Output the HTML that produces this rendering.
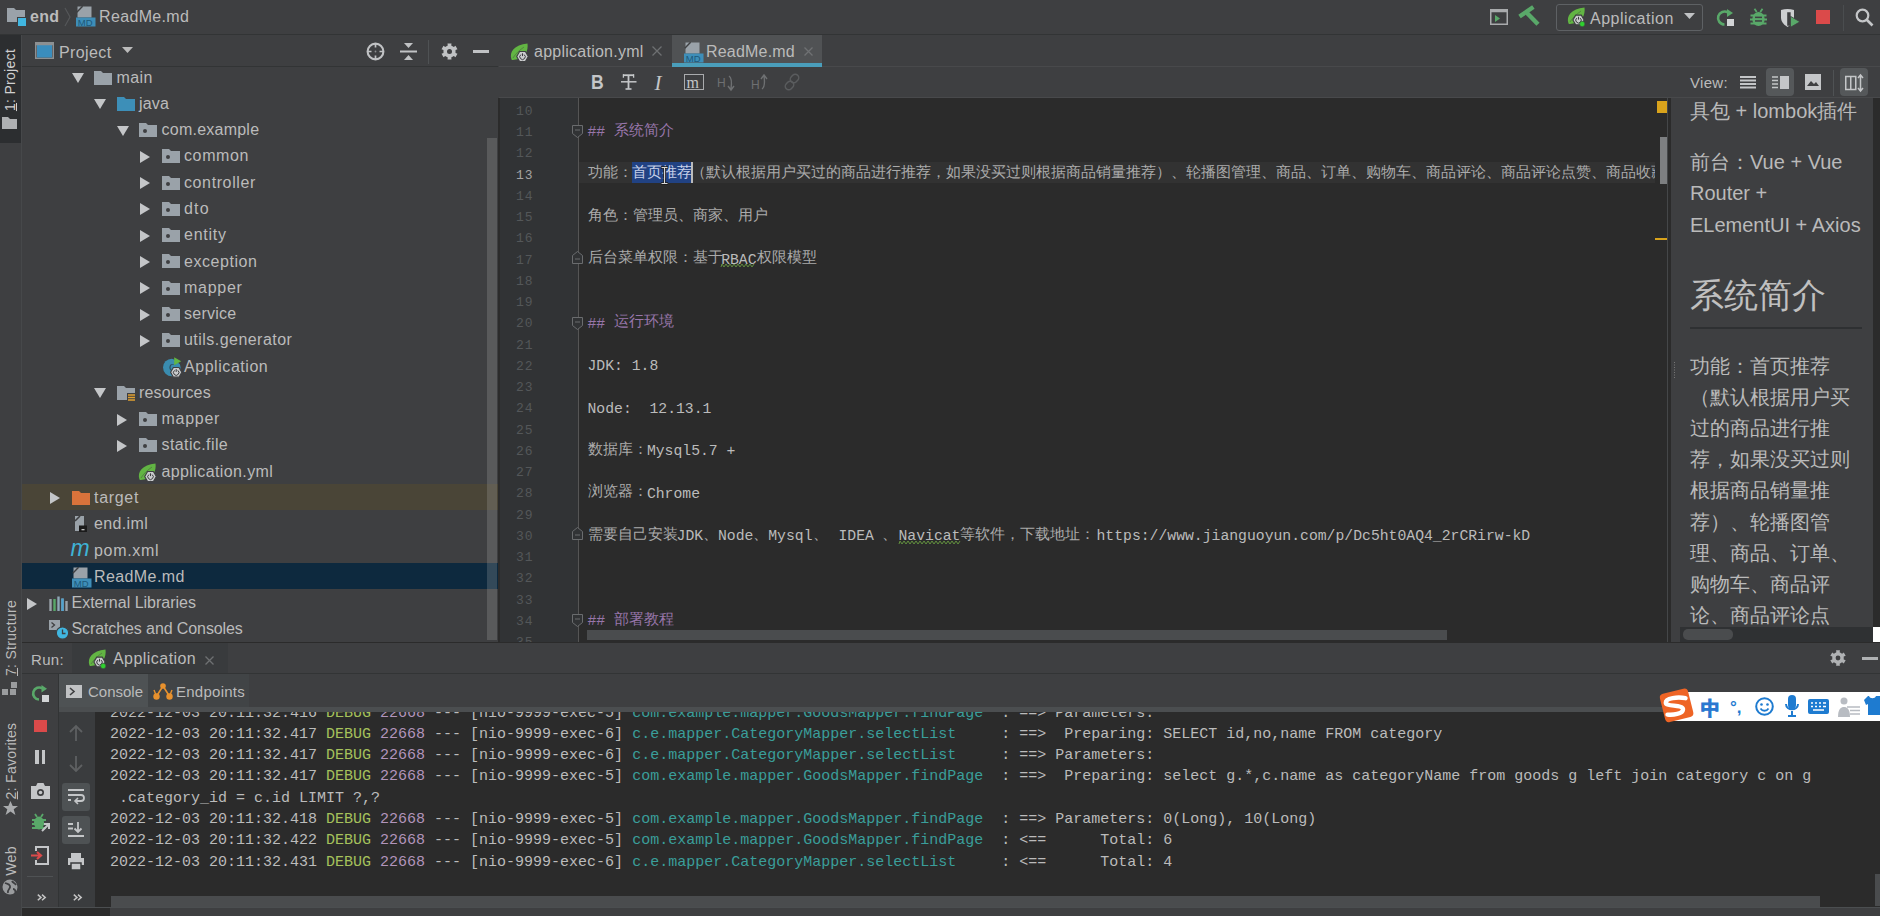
<!DOCTYPE html><html><head><meta charset="utf-8"><style>
*{box-sizing:border-box}
html,body{margin:0;padding:0}
body{width:1880px;height:916px;overflow:hidden;position:relative;background:#3e3f41;font-family:"Liberation Sans",sans-serif;color:#bbbbbb}
.a{position:absolute}
svg{position:absolute;overflow:visible}
</style></head><body>

<div class="a" style="left:0px;top:0px;width:1880px;height:35px;background:#3e3f41;"></div>
<div class="a" style="left:0px;top:34px;width:1880px;height:1px;background:#323435;"></div>
<svg style="left:7px;top:8px" width="20" height="19" viewBox="0 0 20 19"><path d="M0 0h7l2 2h9v12H0z" fill="#9aa2a9"/><rect x="11" y="10" width="8" height="8" fill="#40b6e0"/><rect x="10" y="9" width="10" height="1" fill="#3e3f41"/><rect x="10" y="9" width="1" height="10" fill="#3e3f41"/></svg>
<div class="a" style="left:30px;top:9.16px;white-space:pre;font-family:'Liberation Sans',sans-serif;font-size:16px;line-height:16px;color:#bbbbbb;font-weight:bold;letter-spacing:0.35px;">end</div>
<svg style="left:64px;top:7px" width="8" height="20" viewBox="0 0 8 20"><path d="M1 1 L6 10 L1 19" stroke="#555759" stroke-width="1.2" fill="none"/></svg>
<svg style="left:75.5px;top:5.5px" width="20" height="21" viewBox="0 0 20 21"><path d="M1.5 0.5h14v11h-14z" fill="#9aa2a9"/><path d="M0.8 6.2L6.6 0.2" stroke="#3e3f41" stroke-width="1.4"/><path d="M0 -1h6L0 5z" fill="#3e3f41" opacity="0"/><rect x="0" y="11.5" width="19.5" height="9" fill="#3e8eb8"/><text x="9.2" y="19.6" font-family="Liberation Sans" font-size="9.5" fill="#1d5878" text-anchor="middle">MD</text></svg>
<div class="a" style="left:99px;top:9.16px;white-space:pre;font-family:'Liberation Sans',sans-serif;font-size:16px;line-height:16px;color:#bbbbbb;font-weight:normal;letter-spacing:0.35px;">ReadMe.md</div>
<svg style="left:1490px;top:9px" width="18" height="16" viewBox="0 0 18 16"><rect x="0.75" y="0.75" width="16.5" height="14.5" fill="none" stroke="#a9abad" stroke-width="1.5"/><rect x="0.75" y="0.75" width="16.5" height="2.5" fill="#a9abad"/><path d="M5 6l5 3.5-5 3.5z" fill="#59a869"/></svg>
<svg style="left:1515px;top:2px" width="30" height="28" viewBox="0 0 30 28"><path d="M6.3 13.3 L16.6 6.2" stroke="#59a869" stroke-width="4.3" stroke-linecap="square"/><path d="M12 11 L23 22.3" stroke="#59a869" stroke-width="4.4"/></svg>
<div class="a" style="left:1556px;top:4px;width:147px;height:27px;border:1px solid #5e6164;border-radius:3px"></div>
<svg style="left:1567px;top:7px" width="20" height="20" viewBox="0 0 20 20"><path d="M1.5 16.5 C-1 9 4 2 17.5 0.5 C18.5 8 15 15.5 6 16.5 C4 16.8 2.5 17.5 1.5 16.5z" fill="#62b543"/><path d="M3 15 C6 10 10 7 14 4" stroke="#3e3f41" stroke-width="0.8" fill="none" opacity="0.5"/><polygon points="17.10,13.00 14.30,17.85 8.70,17.85 5.90,13.00 8.70,8.15 14.30,8.15" fill="#c9cbcd" stroke="#3e3f41" stroke-width="1.1"/><path d="M9.90 11.10A2.7 2.7 0 1 0 13.10 11.10" stroke="#3a3b3d" stroke-width="1.0" fill="none"/><path d="M11.50 9.80v2.8" stroke="#3a3b3d" stroke-width="1.0"/><circle cx="15.2" cy="17" r="2.7" fill="#2fd12f" stroke="#3e3f41" stroke-width="0.6"/></svg>
<div class="a" style="left:1590px;top:10.76px;white-space:pre;font-family:'Liberation Sans',sans-serif;font-size:16px;line-height:16px;color:#bbbbbb;font-weight:normal;letter-spacing:0.5px;">Application</div>
<svg style="left:1684px;top:13px" width="12" height="7" viewBox="0 0 12 7"><path d="M0 0h11L5.5 6z" fill="#c0c2c4"/></svg>
<svg style="left:1717px;top:9px" width="18" height="17" viewBox="0 0 18 17"><path d="M11 3.5 A6.5 6.5 0 1 0 7.5 15.5" stroke="#59a869" stroke-width="2.6" fill="none"/><path d="M10 0 L16 4 L10 8z" fill="#59a869"/><rect x="10" y="10" width="7" height="7" fill="#d2d4d6"/></svg>
<svg style="left:1750px;top:8px" width="17" height="18" viewBox="0 0 17 18"><ellipse cx="8.5" cy="11" rx="6.2" ry="7" fill="#59a869"/><path d="M0.5 7.5h16M0 11.5h17M0.5 15.5h16" stroke="#59a869" stroke-width="2.2"/><path d="M4.5 0.8l2.2 3.2M12.5 0.8l-2.2 3.2" stroke="#59a869" stroke-width="1.8"/><rect x="5" y="8.6" width="7" height="1.5" fill="#3e3f41"/><rect x="5" y="12.2" width="7" height="1.5" fill="#3e3f41"/></svg>
<svg style="left:1780px;top:8px" width="21" height="20" viewBox="0 0 21 20"><path d="M1 2 Q7.5 0 14 2 V9.5 C14 14.5 10 17.5 7.5 19 C5 17.5 1 14.5 1 9.5z" fill="#cdcfd1"/><path d="M7.2 4.2h3.6v13.5h-3.6z" fill="#3e3f41"/><path d="M10.8 4.2h3.2v6h-3.2z" fill="#cdcfd1"/><path d="M10.5 8.3 L20 13.8 L10.5 19.3z" fill="#59a869" stroke="#3e3f41" stroke-width="0.8"/></svg>
<div class="a" style="left:1816px;top:10px;width:14px;height:14px;background:#db4a4a;"></div>
<div class="a" style="left:1843px;top:5px;width:1px;height:26px;background:#4a4d4f;"></div>
<svg style="left:1855px;top:8px" width="19" height="19" viewBox="0 0 19 19"><circle cx="7.5" cy="7.5" r="5.8" stroke="#c4c6c8" stroke-width="2.2" fill="none"/><path d="M11.5 11.5 L17.5 17.5" stroke="#c4c6c8" stroke-width="2.6"/></svg>
<div class="a" style="left:0px;top:35px;width:21px;height:881px;background:#3e3f41;"></div>
<div class="a" style="left:21px;top:35px;width:1px;height:881px;background:#46484a;"></div>
<div class="a" style="left:0px;top:35px;width:21px;height:108px;background:#2c2e30;"></div>
<div class="a" style="left:10px;top:80px;transform:translate(-50%,-50%) rotate(-90deg);white-space:nowrap;font-size:14px;line-height:14px;color:#d0d0d0;letter-spacing:0.3px"><u>1</u>: Project</div>
<svg style="left:2px;top:117px" width="15" height="12" viewBox="0 0 15 12"><path d="M0 0h6l2 2h7v10H0z" fill="#aeb0b2"/></svg>
<div class="a" style="left:11px;top:638px;transform:translate(-50%,-50%) rotate(-90deg);white-space:nowrap;font-size:14px;line-height:14px;color:#bbbbbb;letter-spacing:0.3px"><u>7</u>: Structure</div>
<svg style="left:2px;top:682px" width="15" height="13" viewBox="0 0 15 13"><rect x="9" y="0" width="6" height="6" fill="#9a9c9e"/><rect x="0" y="7" width="6" height="6" fill="#9a9c9e"/><rect x="8" y="7" width="6" height="6" fill="#9a9c9e"/></svg>
<div class="a" style="left:11px;top:761px;transform:translate(-50%,-50%) rotate(-90deg);white-space:nowrap;font-size:14px;line-height:14px;color:#bbbbbb;letter-spacing:0.3px"><u>2</u>: Favorites</div>
<svg style="left:3px;top:801px" width="15" height="15" viewBox="0 0 15 15"><path d="M7.5 0l2.2 5h5.3l-4.3 3.3 1.7 5.7-4.9-3.5-4.9 3.5 1.7-5.7L0 5h5.3z" fill="#a9abad"/></svg>
<div class="a" style="left:11px;top:861px;transform:translate(-50%,-50%) rotate(-90deg);white-space:nowrap;font-size:14px;line-height:14px;color:#bbbbbb;letter-spacing:0.3px">Web</div>
<svg style="left:2px;top:879px" width="16" height="16" viewBox="0 0 16 16"><circle cx="8" cy="8" r="7.5" fill="#9a9c9e"/><path d="M3 4c2 1 4 0 5 3s-3 3-2 7M10 2c1 2 3 2 4 4M11 10c2 0 3 2 2 4" stroke="#3e3f41" stroke-width="1.8" fill="none"/></svg>
<div class="a" style="left:22px;top:35px;width:476px;height:607px;background:#3e3f41;"></div>
<div class="a" style="left:22px;top:66px;width:476px;height:1px;background:#323435;"></div>
<svg style="left:35px;top:42px" width="19" height="17" viewBox="0 0 19 17"><rect x="0.75" y="0.75" width="17.5" height="15.5" fill="none" stroke="#8d9092" stroke-width="1.5"/><rect x="2" y="3" width="15" height="12.5" fill="#3a8dbd"/><rect x="0.75" y="0.75" width="17.5" height="2.5" fill="#8d9092"/></svg>
<div class="a" style="left:59px;top:44.76px;white-space:pre;font-family:'Liberation Sans',sans-serif;font-size:16px;line-height:16px;color:#bbbbbb;font-weight:normal;letter-spacing:0.38px;">Project</div>
<svg style="left:122px;top:47px" width="12" height="7" viewBox="0 0 12 7"><path d="M0 0h11L5.5 6z" fill="#bbbbbb"/></svg>
<svg style="left:366px;top:42px" width="19" height="19" viewBox="0 0 19 19"><circle cx="9.5" cy="9.5" r="7.9" stroke="#c0c2c4" stroke-width="2.1" fill="none"/><path d="M9.5 1.5v4M9.5 13.5v4M1.5 9.5h4M13.5 9.5h4" stroke="#c0c2c4" stroke-width="1.7"/><circle cx="9.5" cy="9.5" r="0.9" fill="#8a8c8e"/></svg>
<svg style="left:400px;top:43px" width="17" height="17" viewBox="0 0 17 17"><path d="M4 0h9L8.5 5z" fill="#c0c2c4"/><rect x="0" y="7.5" width="17" height="2" fill="#c0c2c4"/><path d="M4 17h9L8.5 12z" fill="#c0c2c4"/></svg>
<div class="a" style="left:428px;top:40px;width:1px;height:24px;background:#4f5254;"></div>
<svg style="left:441px;top:43px" width="17" height="17" viewBox="0 0 17 17"><path d="M6.79,2.54 L6.49,0.45 L10.51,0.45 L10.21,2.54 L12.81,4.04 L14.47,2.73 L16.48,6.21 L14.52,7.00 L14.52,10.00 L16.48,10.79 L14.47,14.27 L12.81,12.96 L10.21,14.46 L10.51,16.55 L6.49,16.55 L6.79,14.46 L4.19,12.96 L2.53,14.27 L0.52,10.79 L2.48,10.00 L2.48,7.00 L0.52,6.21 L2.53,2.73 L4.19,4.04z" fill="#c0c2c4"/><circle cx="8.5" cy="8.5" r="2.5" fill="#3e3f41"/></svg>
<div class="a" style="left:473px;top:50px;width:16px;height:3px;background:#c0c2c4;"></div>
<div class="a" style="left:22px;top:483.98px;width:476px;height:26.5px;background:#4a4537;"></div>
<div class="a" style="left:22px;top:562.9200000000001px;width:476px;height:25.8px;background:#0d293e;"></div>
<svg style="left:71.5px;top:73.0px" width="12" height="11" viewBox="0 0 12 11"><path d="M0 0h12L6 10z" fill="#c4c6c8"/></svg>
<svg style="left:94.0px;top:70.5px" width="18" height="14" viewBox="0 0 18 14"><path d="M0 0h7l2 2h9v12H0z" fill="#9aa2a9"/></svg>
<div class="a" style="left:116.5px;top:69.56px;white-space:pre;font-family:'Liberation Sans',sans-serif;font-size:16px;line-height:16px;color:#bbbbbb;font-weight:normal;letter-spacing:0.37px;">main</div>
<svg style="left:94.0px;top:99.28px" width="12" height="11" viewBox="0 0 12 11"><path d="M0 0h12L6 10z" fill="#c4c6c8"/></svg>
<svg style="left:116.5px;top:96.78px" width="18" height="14" viewBox="0 0 18 14"><path d="M0 0h7l2 2h9v12H0z" fill="#3d8fb8"/></svg>
<div class="a" style="left:139.0px;top:95.84px;white-space:pre;font-family:'Liberation Sans',sans-serif;font-size:16px;line-height:16px;color:#bbbbbb;font-weight:normal;letter-spacing:0.2px;">java</div>
<svg style="left:116.5px;top:125.56px" width="12" height="11" viewBox="0 0 12 11"><path d="M0 0h12L6 10z" fill="#c4c6c8"/></svg>
<svg style="left:139.0px;top:123.06px" width="18" height="14" viewBox="0 0 18 14"><path d="M0 0h7l2 2h9v12H0z" fill="#9aa2a9"/><circle cx="6" cy="8" r="2" fill="#3e3f41"/></svg>
<div class="a" style="left:161.5px;top:122.12px;white-space:pre;font-family:'Liberation Sans',sans-serif;font-size:16px;line-height:16px;color:#bbbbbb;font-weight:normal;letter-spacing:0.24px;">com.example</div>
<svg style="left:139.5px;top:150.84px" width="11" height="12" viewBox="0 0 11 12"><path d="M0 0v12L10 6z" fill="#c4c6c8"/></svg>
<svg style="left:161.5px;top:149.34px" width="18" height="14" viewBox="0 0 18 14"><path d="M0 0h7l2 2h9v12H0z" fill="#9aa2a9"/><circle cx="6" cy="8" r="2" fill="#3e3f41"/></svg>
<div class="a" style="left:184.0px;top:148.40px;white-space:pre;font-family:'Liberation Sans',sans-serif;font-size:16px;line-height:16px;color:#bbbbbb;font-weight:normal;letter-spacing:0.62px;">common</div>
<svg style="left:139.5px;top:177.12px" width="11" height="12" viewBox="0 0 11 12"><path d="M0 0v12L10 6z" fill="#c4c6c8"/></svg>
<svg style="left:161.5px;top:175.62px" width="18" height="14" viewBox="0 0 18 14"><path d="M0 0h7l2 2h9v12H0z" fill="#9aa2a9"/><circle cx="6" cy="8" r="2" fill="#3e3f41"/></svg>
<div class="a" style="left:184.0px;top:174.68px;white-space:pre;font-family:'Liberation Sans',sans-serif;font-size:16px;line-height:16px;color:#bbbbbb;font-weight:normal;letter-spacing:0.61px;">controller</div>
<svg style="left:139.5px;top:203.4px" width="11" height="12" viewBox="0 0 11 12"><path d="M0 0v12L10 6z" fill="#c4c6c8"/></svg>
<svg style="left:161.5px;top:201.9px" width="18" height="14" viewBox="0 0 18 14"><path d="M0 0h7l2 2h9v12H0z" fill="#9aa2a9"/><circle cx="6" cy="8" r="2" fill="#3e3f41"/></svg>
<div class="a" style="left:184.0px;top:200.96px;white-space:pre;font-family:'Liberation Sans',sans-serif;font-size:16px;line-height:16px;color:#bbbbbb;font-weight:normal;letter-spacing:1.2px;">dto</div>
<svg style="left:139.5px;top:229.68px" width="11" height="12" viewBox="0 0 11 12"><path d="M0 0v12L10 6z" fill="#c4c6c8"/></svg>
<svg style="left:161.5px;top:228.18px" width="18" height="14" viewBox="0 0 18 14"><path d="M0 0h7l2 2h9v12H0z" fill="#9aa2a9"/><circle cx="6" cy="8" r="2" fill="#3e3f41"/></svg>
<div class="a" style="left:184.0px;top:227.24px;white-space:pre;font-family:'Liberation Sans',sans-serif;font-size:16px;line-height:16px;color:#bbbbbb;font-weight:normal;letter-spacing:0.76px;">entity</div>
<svg style="left:139.5px;top:255.96px" width="11" height="12" viewBox="0 0 11 12"><path d="M0 0v12L10 6z" fill="#c4c6c8"/></svg>
<svg style="left:161.5px;top:254.46px" width="18" height="14" viewBox="0 0 18 14"><path d="M0 0h7l2 2h9v12H0z" fill="#9aa2a9"/><circle cx="6" cy="8" r="2" fill="#3e3f41"/></svg>
<div class="a" style="left:184.0px;top:253.52px;white-space:pre;font-family:'Liberation Sans',sans-serif;font-size:16px;line-height:16px;color:#bbbbbb;font-weight:normal;letter-spacing:0.54px;">exception</div>
<svg style="left:139.5px;top:282.24px" width="11" height="12" viewBox="0 0 11 12"><path d="M0 0v12L10 6z" fill="#c4c6c8"/></svg>
<svg style="left:161.5px;top:280.74px" width="18" height="14" viewBox="0 0 18 14"><path d="M0 0h7l2 2h9v12H0z" fill="#9aa2a9"/><circle cx="6" cy="8" r="2" fill="#3e3f41"/></svg>
<div class="a" style="left:184.0px;top:279.80px;white-space:pre;font-family:'Liberation Sans',sans-serif;font-size:16px;line-height:16px;color:#bbbbbb;font-weight:normal;letter-spacing:0.72px;">mapper</div>
<svg style="left:139.5px;top:308.52px" width="11" height="12" viewBox="0 0 11 12"><path d="M0 0v12L10 6z" fill="#c4c6c8"/></svg>
<svg style="left:161.5px;top:307.02px" width="18" height="14" viewBox="0 0 18 14"><path d="M0 0h7l2 2h9v12H0z" fill="#9aa2a9"/><circle cx="6" cy="8" r="2" fill="#3e3f41"/></svg>
<div class="a" style="left:184.0px;top:306.08px;white-space:pre;font-family:'Liberation Sans',sans-serif;font-size:16px;line-height:16px;color:#bbbbbb;font-weight:normal;letter-spacing:0.25px;">service</div>
<svg style="left:139.5px;top:334.8px" width="11" height="12" viewBox="0 0 11 12"><path d="M0 0v12L10 6z" fill="#c4c6c8"/></svg>
<svg style="left:161.5px;top:333.3px" width="18" height="14" viewBox="0 0 18 14"><path d="M0 0h7l2 2h9v12H0z" fill="#9aa2a9"/><circle cx="6" cy="8" r="2" fill="#3e3f41"/></svg>
<div class="a" style="left:184.0px;top:332.36px;white-space:pre;font-family:'Liberation Sans',sans-serif;font-size:16px;line-height:16px;color:#bbbbbb;font-weight:normal;letter-spacing:0.46px;">utils.generator</div>
<svg style="left:161.5px;top:356.58000000000004px" width="20" height="20" viewBox="0 0 20 20"><circle cx="9.8" cy="10.5" r="8.8" fill="#3a8caf"/><circle cx="10.8" cy="10.5" r="3.4" fill="#2f4f5f"/><circle cx="11.6" cy="10.5" r="3.0" fill="#3a8caf"/><path d="M10 1 L19 8 L19 0z" fill="#3e3f41"/><path d="M12.2 0.3 L19.2 4.3 L12.2 8.3z" fill="#62b543"/><polygon points="19.80,15.30 17.00,20.15 11.40,20.15 8.60,15.30 11.40,10.45 17.00,10.45" fill="#c9cbcd" stroke="#3e3f41" stroke-width="1.1"/><path d="M12.60 13.40A2.7 2.7 0 1 0 15.80 13.40" stroke="#3a3b3d" stroke-width="1.0" fill="none"/><path d="M14.20 12.10v2.8" stroke="#3a3b3d" stroke-width="1.0"/></svg>
<div class="a" style="left:184.0px;top:358.64px;white-space:pre;font-family:'Liberation Sans',sans-serif;font-size:16px;line-height:16px;color:#bbbbbb;font-weight:normal;letter-spacing:0.55px;">Application</div>
<svg style="left:94.0px;top:388.36px" width="12" height="11" viewBox="0 0 12 11"><path d="M0 0h12L6 10z" fill="#c4c6c8"/></svg>
<svg style="left:116.5px;top:385.86px" width="20" height="16" viewBox="0 0 20 16"><path d="M0 0h7l2 2h9v12H0z" fill="#9aa2a9"/><rect x="10" y="7" width="9" height="9" fill="#3e3f41"/><path d="M11 9h7M11 11.5h7M11 14h7" stroke="#e0a030" stroke-width="1.5"/></svg>
<div class="a" style="left:139.0px;top:384.92px;white-space:pre;font-family:'Liberation Sans',sans-serif;font-size:16px;line-height:16px;color:#bbbbbb;font-weight:normal;letter-spacing:0.18px;">resources</div>
<svg style="left:117.0px;top:413.64px" width="11" height="12" viewBox="0 0 11 12"><path d="M0 0v12L10 6z" fill="#c4c6c8"/></svg>
<svg style="left:139.0px;top:412.14px" width="18" height="14" viewBox="0 0 18 14"><path d="M0 0h7l2 2h9v12H0z" fill="#9aa2a9"/><circle cx="6" cy="8" r="2" fill="#3e3f41"/></svg>
<div class="a" style="left:161.5px;top:411.20px;white-space:pre;font-family:'Liberation Sans',sans-serif;font-size:16px;line-height:16px;color:#bbbbbb;font-weight:normal;letter-spacing:0.72px;">mapper</div>
<svg style="left:117.0px;top:439.92px" width="11" height="12" viewBox="0 0 11 12"><path d="M0 0v12L10 6z" fill="#c4c6c8"/></svg>
<svg style="left:139.0px;top:438.42px" width="18" height="14" viewBox="0 0 18 14"><path d="M0 0h7l2 2h9v12H0z" fill="#9aa2a9"/><circle cx="6" cy="8" r="2" fill="#3e3f41"/></svg>
<div class="a" style="left:161.5px;top:437.48px;white-space:pre;font-family:'Liberation Sans',sans-serif;font-size:16px;line-height:16px;color:#bbbbbb;font-weight:normal;letter-spacing:0.4px;">static.file</div>
<svg style="left:138.0px;top:463.20000000000005px" width="20" height="20" viewBox="0 0 20 20"><path d="M1.5 16.5 C-1 9 4 2 17.5 0.5 C18.5 8 15 15.5 6 16.5 C4 16.8 2.5 17.5 1.5 16.5z" fill="#62b543"/><path d="M3 15 C6 10 10 7 14 4" stroke="#3e3f41" stroke-width="0.8" fill="none" opacity="0.5"/><polygon points="18.30,13.50 15.40,18.52 9.60,18.52 6.70,13.50 9.60,8.48 15.40,8.48" fill="#c9cbcd" stroke="#3e3f41" stroke-width="1.1"/><path d="M10.90 11.60A2.7 2.7 0 1 0 14.10 11.60" stroke="#3a3b3d" stroke-width="1.0" fill="none"/><path d="M12.50 10.30v2.8" stroke="#3a3b3d" stroke-width="1.0"/></svg>
<div class="a" style="left:161.5px;top:463.76px;white-space:pre;font-family:'Liberation Sans',sans-serif;font-size:16px;line-height:16px;color:#bbbbbb;font-weight:normal;letter-spacing:0.39px;">application.yml</div>
<svg style="left:49.5px;top:492.48px" width="11" height="12" viewBox="0 0 11 12"><path d="M0 0v12L10 6z" fill="#c4c6c8"/></svg>
<svg style="left:71.5px;top:490.98px" width="18" height="14" viewBox="0 0 18 14"><path d="M0 0h7l2 2h9v12H0z" fill="#d9733b"/></svg>
<div class="a" style="left:94.0px;top:490.04px;white-space:pre;font-family:'Liberation Sans',sans-serif;font-size:16px;line-height:16px;color:#bbbbbb;font-weight:normal;letter-spacing:0.7px;">target</div>
<svg style="left:71.5px;top:515.76px" width="18" height="18" viewBox="0 0 18 18"><path d="M3 0h9v15H3z" fill="#9aa2a9"/><path d="M3 5l5-5" stroke="#3e3f41" stroke-width="1.6"/><rect x="7" y="9.5" width="8" height="6.5" fill="#1b1b1b"/><rect x="9.5" y="13" width="3" height="1.3" fill="#c0c0c0"/></svg>
<div class="a" style="left:94.0px;top:516.32px;white-space:pre;font-family:'Liberation Sans',sans-serif;font-size:16px;line-height:16px;color:#bbbbbb;font-weight:normal;letter-spacing:0.37px;">end.iml</div>
<div class="a" style="left:70.5px;top:536.67px;white-space:pre;font-family:'Liberation Sans',sans-serif;font-size:23px;line-height:23px;color:#3eb3d6;font-weight:normal;letter-spacing:0px;"><i>m</i></div>
<div class="a" style="left:94.0px;top:542.60px;white-space:pre;font-family:'Liberation Sans',sans-serif;font-size:16px;line-height:16px;color:#bbbbbb;font-weight:normal;letter-spacing:0.7px;">pom.xml</div>
<svg style="left:71.5px;top:567.32px" width="20" height="21" viewBox="0 0 20 21"><path d="M1.5 0.5h14v11h-14z" fill="#9aa2a9"/><path d="M0.8 6.2L6.6 0.2" stroke="#3e3f41" stroke-width="1.4"/><path d="M0 -1h6L0 5z" fill="#3e3f41" opacity="0"/><rect x="0" y="11.5" width="19.5" height="9" fill="#3e8eb8"/><text x="9.2" y="19.6" font-family="Liberation Sans" font-size="9.5" fill="#1d5878" text-anchor="middle">MD</text></svg>
<div class="a" style="left:94.0px;top:568.88px;white-space:pre;font-family:'Liberation Sans',sans-serif;font-size:16px;line-height:16px;color:#bbbbbb;font-weight:normal;letter-spacing:0.4px;">ReadMe.md</div>
<svg style="left:27.0px;top:597.6px" width="11" height="12" viewBox="0 0 11 12"><path d="M0 0v12L10 6z" fill="#c4c6c8"/></svg>
<svg style="left:49.0px;top:595.6px" width="19" height="15" viewBox="0 0 19 15"><path d="M1.5 3v12M13.5 2.5v12.5M17.5 5v10" stroke="#9aa2a9" stroke-width="2.4"/><path d="M5.5 3v12" stroke="#59a869" stroke-width="2.4"/><path d="M9.5 0.5v14.5" stroke="#8fa8b8" stroke-width="2.4"/><path d="M13.5 2.5v12.5" stroke="#4fa3d0" stroke-width="2.4"/></svg>
<div class="a" style="left:71.5px;top:595.16px;white-space:pre;font-family:'Liberation Sans',sans-serif;font-size:16px;line-height:16px;color:#bbbbbb;font-weight:normal;letter-spacing:0.0px;">External Libraries</div>
<svg style="left:49.0px;top:619.88px" width="20" height="20" viewBox="0 0 20 20"><rect x="0" y="0" width="11" height="10" fill="#9aa2a9"/><path d="M2.5 2.5l3 2.5-3 2.5" stroke="#3e3f41" stroke-width="1.3" fill="none"/><circle cx="13.5" cy="13" r="6.2" fill="#40b6e0" stroke="#3e3f41" stroke-width="1.2"/><path d="M13.5 9.5v4h3" stroke="#3e3f41" stroke-width="1.3" fill="none"/></svg>
<div class="a" style="left:71.5px;top:621.44px;white-space:pre;font-family:'Liberation Sans',sans-serif;font-size:16px;line-height:16px;color:#bbbbbb;font-weight:normal;letter-spacing:-0.1px;">Scratches and Consoles</div>
<div class="a" style="left:487px;top:137.5px;width:10px;height:502px;background:rgba(187,187,187,0.22);"></div>
<div class="a" style="left:498px;top:35px;width:1382px;height:31px;background:#3e3f41;"></div>
<div class="a" style="left:498px;top:98px;width:1px;height:544px;background:#2b2b2b;"></div>
<div class="a" style="left:499px;top:66px;width:1381px;height:1px;background:#48494b;"></div>
<div class="a" style="left:672px;top:35px;width:150px;height:31px;background:#505254;"></div>
<div class="a" style="left:672px;top:62.5px;width:150px;height:4.5px;background:#4a9ebb;"></div>
<svg style="left:510px;top:43px" width="20" height="20" viewBox="0 0 20 20"><path d="M1.5 16.5 C-1 9 4 2 17.5 0.5 C18.5 8 15 15.5 6 16.5 C4 16.8 2.5 17.5 1.5 16.5z" fill="#62b543"/><path d="M3 15 C6 10 10 7 14 4" stroke="#3e3f41" stroke-width="0.8" fill="none" opacity="0.5"/><polygon points="18.30,13.50 15.40,18.52 9.60,18.52 6.70,13.50 9.60,8.48 15.40,8.48" fill="#c9cbcd" stroke="#3e3f41" stroke-width="1.1"/><path d="M10.90 11.60A2.7 2.7 0 1 0 14.10 11.60" stroke="#3a3b3d" stroke-width="1.0" fill="none"/><path d="M12.50 10.30v2.8" stroke="#3a3b3d" stroke-width="1.0"/></svg>
<div class="a" style="left:534px;top:44.46px;white-space:pre;font-family:'Liberation Sans',sans-serif;font-size:16px;line-height:16px;color:#bbbbbb;font-weight:normal;letter-spacing:0.25px;">application.yml</div>
<svg style="left:652px;top:46px" width="10" height="10" viewBox="0 0 10 10"><path d="M0.5 0.5l9 9M9.5 0.5l-9 9" stroke="#6e7072" stroke-width="1.3"/></svg>
<svg style="left:684px;top:41.5px" width="20" height="21" viewBox="0 0 20 21"><path d="M1.5 0.5h14v11h-14z" fill="#9aa2a9"/><path d="M0.8 6.2L6.6 0.2" stroke="#3e3f41" stroke-width="1.4"/><path d="M0 -1h6L0 5z" fill="#3e3f41" opacity="0"/><rect x="0" y="11.5" width="19.5" height="9" fill="#3e8eb8"/><text x="9.2" y="19.6" font-family="Liberation Sans" font-size="9.5" fill="#1d5878" text-anchor="middle">MD</text></svg>
<div class="a" style="left:706px;top:44.46px;white-space:pre;font-family:'Liberation Sans',sans-serif;font-size:16px;line-height:16px;color:#bbbbbb;font-weight:normal;letter-spacing:0.2px;">ReadMe.md</div>
<svg style="left:804px;top:47px" width="9" height="9" viewBox="0 0 9 9"><path d="M0.5 0.5l8 8M8.5 0.5l-8 8" stroke="#6f7173" stroke-width="1.3"/></svg>
<div class="a" style="left:499px;top:67px;width:1381px;height:30px;background:#3e3f41;"></div>
<div class="a" style="left:499px;top:97px;width:1381px;height:1px;background:#48494b;"></div>
<div class="a" style="left:590.5px;top:72.37px;white-space:pre;font-family:'Liberation Sans',sans-serif;font-size:20px;line-height:20px;color:#c4c6c8;font-weight:bold;letter-spacing:0px;transform:scaleX(0.88);transform-origin:0 0;">B</div>
<svg style="left:620px;top:74px" width="17" height="16" viewBox="0 0 17 16"><path d="M3 1.2h11" stroke="#c4c6c8" stroke-width="1.8"/><path d="M3.4 0.3v3.4M13.6 0.3v3.4" stroke="#c4c6c8" stroke-width="1.3"/><path d="M8.5 1v14" stroke="#c4c6c8" stroke-width="1.8"/><path d="M5.5 15h6" stroke="#c4c6c8" stroke-width="1.6"/><path d="M1 7.8h15.5" stroke="#c4c6c8" stroke-width="1.5"/></svg>
<div class="a" style="left:654.5px;top:73.40px;white-space:pre;font-family:'Liberation Serif',serif;font-size:21px;line-height:21px;color:#c4c6c8;font-weight:normal;letter-spacing:0px;"><i>I</i></div>
<svg style="left:684px;top:74px" width="20" height="16" viewBox="0 0 20 16"><rect x="0.5" y="0.5" width="19" height="15" fill="none" stroke="#a9abad" stroke-width="1"/></svg>
<div class="a" style="left:686.5px;top:74.74px;white-space:pre;font-family:'Liberation Serif',serif;font-size:16px;line-height:16px;color:#c4c6c8;font-weight:normal;letter-spacing:0px;">m</div>
<div class="a" style="left:717px;top:76.84px;white-space:pre;font-family:'Liberation Sans',sans-serif;font-size:12px;line-height:12px;color:#6e7072;font-weight:normal;letter-spacing:0px;">H</div>
<svg style="left:727px;top:76px" width="8" height="15" viewBox="0 0 8 15"><path d="M2 0c3 2 3 6 2 13M1 10l3 4 3-4" stroke="#6e7072" stroke-width="1.4" fill="none"/></svg>
<div class="a" style="left:751px;top:78.84px;white-space:pre;font-family:'Liberation Sans',sans-serif;font-size:12px;line-height:12px;color:#6e7072;font-weight:normal;letter-spacing:0px;">H</div>
<svg style="left:760px;top:74px" width="8" height="15" viewBox="0 0 8 15"><path d="M2 15c3-2 3-6 2-13M1 5l3-4 3 4" stroke="#6e7072" stroke-width="1.4" fill="none"/></svg>
<svg style="left:784px;top:74px" width="16" height="16" viewBox="0 0 16 16"><rect x="7" y="0" width="7" height="9" rx="3.5" transform="rotate(45 10.5 4.5)" fill="none" stroke="#5a5c5e" stroke-width="1.5"/><rect x="2" y="7" width="7" height="9" rx="3.5" transform="rotate(45 5.5 11.5)" fill="none" stroke="#5a5c5e" stroke-width="1.5"/></svg>
<div class="a" style="left:1690px;top:75.30px;white-space:pre;font-family:'Liberation Sans',sans-serif;font-size:15px;line-height:15px;color:#bbbbbb;font-weight:normal;letter-spacing:0.3px;">View:</div>
<svg style="left:1740px;top:76px" width="16" height="13" viewBox="0 0 16 13"><path d="M0 1h16M0 4.5h16M0 8h16M0 11.5h16" stroke="#c4c6c8" stroke-width="1.8"/></svg>
<div class="a" style="left:1766px;top:68px;width:28px;height:28px;background:#55585a;border-radius:4px"></div>
<svg style="left:1772px;top:76px" width="17" height="14" viewBox="0 0 17 14"><path d="M0 1h6M0 4.5h6M0 8h6M0 11.5h6" stroke="#c4c6c8" stroke-width="1.6"/><rect x="8" y="0" width="9" height="13" fill="#c4c6c8"/></svg>
<svg style="left:1805px;top:74px" width="16" height="16" viewBox="0 0 16 16"><rect x="0" y="0" width="16" height="16" fill="#c4c6c8"/><path d="M2 12l4-5 3 3 2-2 3 4z" fill="#3e3f41"/></svg>
<div class="a" style="left:1833px;top:70px;width:1px;height:26px;background:#4f5254;"></div>
<div class="a" style="left:1840px;top:68px;width:28px;height:28px;background:#55585a;border-radius:4px"></div>
<svg style="left:1845px;top:75px" width="19" height="17" viewBox="0 0 19 17"><rect x="0.75" y="1.5" width="10" height="13" fill="none" stroke="#c4c6c8" stroke-width="1.5"/><path d="M5.75 1.5v13" stroke="#c4c6c8" stroke-width="1.5"/><path d="M15.5 0v16M13 3l2.5-3 2.5 3M13 13l2.5 3 2.5-3" stroke="#c4c6c8" stroke-width="1.5" fill="none"/></svg>
<div class="a" style="left:499px;top:98px;width:1171px;height:544px;background:#2b2b2b;"></div>
<div class="a" style="left:500px;top:98px;width:78px;height:544px;background:#313335;"></div>
<div class="a" style="left:578px;top:98px;width:1px;height:544px;background:#555555;"></div>
<div class="a" style="left:579px;top:162.0px;width:1081px;height:21.25px;background:#323232;"></div>
<div class="a" style="left:632px;top:162.0px;width:59.5px;height:21.25px;background:#214283;"></div>
<div class="a" style="left:691px;top:162.0px;width:2px;height:21.25px;background:#bbbbbb;"></div>
<div class="a" style="left:516px;top:104.89px;white-space:pre;font-family:'Liberation Mono',monospace;font-size:13px;line-height:13px;color:#545759;font-weight:normal;letter-spacing:0.9px;">10</div>
<div class="a" style="left:516px;top:126.14px;white-space:pre;font-family:'Liberation Mono',monospace;font-size:13px;line-height:13px;color:#545759;font-weight:normal;letter-spacing:0.9px;">11</div>
<div class="a" style="left:516px;top:147.39px;white-space:pre;font-family:'Liberation Mono',monospace;font-size:13px;line-height:13px;color:#545759;font-weight:normal;letter-spacing:0.9px;">12</div>
<div class="a" style="left:516px;top:168.64px;white-space:pre;font-family:'Liberation Mono',monospace;font-size:13px;line-height:13px;color:#a4a3a3;font-weight:normal;letter-spacing:0.9px;">13</div>
<div class="a" style="left:516px;top:189.89px;white-space:pre;font-family:'Liberation Mono',monospace;font-size:13px;line-height:13px;color:#545759;font-weight:normal;letter-spacing:0.9px;">14</div>
<div class="a" style="left:516px;top:211.14px;white-space:pre;font-family:'Liberation Mono',monospace;font-size:13px;line-height:13px;color:#545759;font-weight:normal;letter-spacing:0.9px;">15</div>
<div class="a" style="left:516px;top:232.39px;white-space:pre;font-family:'Liberation Mono',monospace;font-size:13px;line-height:13px;color:#545759;font-weight:normal;letter-spacing:0.9px;">16</div>
<div class="a" style="left:516px;top:253.64px;white-space:pre;font-family:'Liberation Mono',monospace;font-size:13px;line-height:13px;color:#545759;font-weight:normal;letter-spacing:0.9px;">17</div>
<div class="a" style="left:516px;top:274.89px;white-space:pre;font-family:'Liberation Mono',monospace;font-size:13px;line-height:13px;color:#545759;font-weight:normal;letter-spacing:0.9px;">18</div>
<div class="a" style="left:516px;top:296.14px;white-space:pre;font-family:'Liberation Mono',monospace;font-size:13px;line-height:13px;color:#545759;font-weight:normal;letter-spacing:0.9px;">19</div>
<div class="a" style="left:516px;top:317.39px;white-space:pre;font-family:'Liberation Mono',monospace;font-size:13px;line-height:13px;color:#545759;font-weight:normal;letter-spacing:0.9px;">20</div>
<div class="a" style="left:516px;top:338.64px;white-space:pre;font-family:'Liberation Mono',monospace;font-size:13px;line-height:13px;color:#545759;font-weight:normal;letter-spacing:0.9px;">21</div>
<div class="a" style="left:516px;top:359.89px;white-space:pre;font-family:'Liberation Mono',monospace;font-size:13px;line-height:13px;color:#545759;font-weight:normal;letter-spacing:0.9px;">22</div>
<div class="a" style="left:516px;top:381.14px;white-space:pre;font-family:'Liberation Mono',monospace;font-size:13px;line-height:13px;color:#545759;font-weight:normal;letter-spacing:0.9px;">23</div>
<div class="a" style="left:516px;top:402.39px;white-space:pre;font-family:'Liberation Mono',monospace;font-size:13px;line-height:13px;color:#545759;font-weight:normal;letter-spacing:0.9px;">24</div>
<div class="a" style="left:516px;top:423.64px;white-space:pre;font-family:'Liberation Mono',monospace;font-size:13px;line-height:13px;color:#545759;font-weight:normal;letter-spacing:0.9px;">25</div>
<div class="a" style="left:516px;top:444.89px;white-space:pre;font-family:'Liberation Mono',monospace;font-size:13px;line-height:13px;color:#545759;font-weight:normal;letter-spacing:0.9px;">26</div>
<div class="a" style="left:516px;top:466.14px;white-space:pre;font-family:'Liberation Mono',monospace;font-size:13px;line-height:13px;color:#545759;font-weight:normal;letter-spacing:0.9px;">27</div>
<div class="a" style="left:516px;top:487.39px;white-space:pre;font-family:'Liberation Mono',monospace;font-size:13px;line-height:13px;color:#545759;font-weight:normal;letter-spacing:0.9px;">28</div>
<div class="a" style="left:516px;top:508.64px;white-space:pre;font-family:'Liberation Mono',monospace;font-size:13px;line-height:13px;color:#545759;font-weight:normal;letter-spacing:0.9px;">29</div>
<div class="a" style="left:516px;top:529.89px;white-space:pre;font-family:'Liberation Mono',monospace;font-size:13px;line-height:13px;color:#545759;font-weight:normal;letter-spacing:0.9px;">30</div>
<div class="a" style="left:516px;top:551.14px;white-space:pre;font-family:'Liberation Mono',monospace;font-size:13px;line-height:13px;color:#545759;font-weight:normal;letter-spacing:0.9px;">31</div>
<div class="a" style="left:516px;top:572.39px;white-space:pre;font-family:'Liberation Mono',monospace;font-size:13px;line-height:13px;color:#545759;font-weight:normal;letter-spacing:0.9px;">32</div>
<div class="a" style="left:516px;top:593.64px;white-space:pre;font-family:'Liberation Mono',monospace;font-size:13px;line-height:13px;color:#545759;font-weight:normal;letter-spacing:0.9px;">33</div>
<div class="a" style="left:516px;top:614.89px;white-space:pre;font-family:'Liberation Mono',monospace;font-size:13px;line-height:13px;color:#545759;font-weight:normal;letter-spacing:0.9px;">34</div>
<div class="a" style="left:516px;top:636.14px;white-space:pre;font-family:'Liberation Mono',monospace;font-size:13px;line-height:13px;color:#545759;font-weight:normal;letter-spacing:0.9px;">35</div>
<div class="a" style="left:579px;top:98px;width:1082px;height:544px;overflow:hidden">
<div class="a" style="left:8.50px;top:27.29px;white-space:pre;font-family:'Liberation Mono',monospace;font-size:14.75px;line-height:14.75px;color:#9876aa">## </div>
<div class="a" style="left:35.05px;top:24.83px;white-space:pre;font-family:'Liberation Sans',sans-serif;font-size:14.85px;line-height:14.85px;color:#9876aa">系统简介</div>
<div class="a" style="left:8.50px;top:67.33px;white-space:pre;font-family:'Liberation Sans',sans-serif;font-size:14.85px;line-height:14.85px;color:#aaaaaa">功能：</div>
<div class="a" style="left:53.05px;top:67.33px;white-space:pre;font-family:'Liberation Sans',sans-serif;font-size:14.85px;line-height:14.85px;color:#c6d0e8">首页推荐</div>
<div class="a" style="left:112.45px;top:67.33px;white-space:pre;font-family:'Liberation Sans',sans-serif;font-size:14.85px;line-height:14.85px;color:#aaaaaa">（默认根据用户买过的商品进行推荐，如果没买过则根据商品销量推荐）、轮播图管理、商品、订单、购物车、商品评论、商品评论点赞、商品收藏</div>
<div class="a" style="left:8.50px;top:109.83px;white-space:pre;font-family:'Liberation Sans',sans-serif;font-size:14.85px;line-height:14.85px;color:#aaaaaa">角色：管理员、商家、用户</div>
<div class="a" style="left:8.50px;top:152.33px;white-space:pre;font-family:'Liberation Sans',sans-serif;font-size:14.85px;line-height:14.85px;color:#aaaaaa">后台菜单权限：基于</div>
<div class="a" style="left:142.15px;top:154.79px;white-space:pre;font-family:'Liberation Mono',monospace;font-size:14.75px;line-height:14.75px;color:#bbbbbb">RBAC</div>
<div class="a" style="left:177.55px;top:152.33px;white-space:pre;font-family:'Liberation Sans',sans-serif;font-size:14.85px;line-height:14.85px;color:#aaaaaa">权限模型</div>
<div class="a" style="left:8.50px;top:218.54px;white-space:pre;font-family:'Liberation Mono',monospace;font-size:14.75px;line-height:14.75px;color:#9876aa">## </div>
<div class="a" style="left:35.05px;top:216.08px;white-space:pre;font-family:'Liberation Sans',sans-serif;font-size:14.85px;line-height:14.85px;color:#9876aa">运行环境</div>
<div class="a" style="left:8.50px;top:261.04px;white-space:pre;font-family:'Liberation Mono',monospace;font-size:14.75px;line-height:14.75px;color:#bbbbbb">JDK: 1.8</div>
<div class="a" style="left:8.50px;top:303.54px;white-space:pre;font-family:'Liberation Mono',monospace;font-size:14.75px;line-height:14.75px;color:#bbbbbb">Node:  12.13.1</div>
<div class="a" style="left:8.50px;top:343.58px;white-space:pre;font-family:'Liberation Sans',sans-serif;font-size:14.85px;line-height:14.85px;color:#aaaaaa">数据库：</div>
<div class="a" style="left:67.90px;top:346.04px;white-space:pre;font-family:'Liberation Mono',monospace;font-size:14.75px;line-height:14.75px;color:#bbbbbb">Mysql5.7 +</div>
<div class="a" style="left:8.50px;top:386.08px;white-space:pre;font-family:'Liberation Sans',sans-serif;font-size:14.85px;line-height:14.85px;color:#aaaaaa">浏览器：</div>
<div class="a" style="left:67.90px;top:388.54px;white-space:pre;font-family:'Liberation Mono',monospace;font-size:14.75px;line-height:14.75px;color:#bbbbbb">Chrome</div>
<div class="a" style="left:8.50px;top:428.58px;white-space:pre;font-family:'Liberation Sans',sans-serif;font-size:14.85px;line-height:14.85px;color:#aaaaaa">需要自己安装</div>
<div class="a" style="left:97.60px;top:431.04px;white-space:pre;font-family:'Liberation Mono',monospace;font-size:14.75px;line-height:14.75px;color:#bbbbbb">JDK</div>
<div class="a" style="left:124.15px;top:428.58px;white-space:pre;font-family:'Liberation Sans',sans-serif;font-size:14.85px;line-height:14.85px;color:#aaaaaa">、</div>
<div class="a" style="left:139.00px;top:431.04px;white-space:pre;font-family:'Liberation Mono',monospace;font-size:14.75px;line-height:14.75px;color:#bbbbbb">Node</div>
<div class="a" style="left:174.40px;top:428.58px;white-space:pre;font-family:'Liberation Sans',sans-serif;font-size:14.85px;line-height:14.85px;color:#aaaaaa">、</div>
<div class="a" style="left:189.25px;top:431.04px;white-space:pre;font-family:'Liberation Mono',monospace;font-size:14.75px;line-height:14.75px;color:#bbbbbb">Mysql</div>
<div class="a" style="left:233.50px;top:428.58px;white-space:pre;font-family:'Liberation Sans',sans-serif;font-size:14.85px;line-height:14.85px;color:#aaaaaa">、</div>
<div class="a" style="left:259.50px;top:431.04px;white-space:pre;font-family:'Liberation Mono',monospace;font-size:14.75px;line-height:14.75px;color:#bbbbbb">IDEA</div>
<div class="a" style="left:303.00px;top:428.58px;white-space:pre;font-family:'Liberation Sans',sans-serif;font-size:14.85px;line-height:14.85px;color:#aaaaaa">、</div>
<div class="a" style="left:319.50px;top:431.04px;white-space:pre;font-family:'Liberation Mono',monospace;font-size:14.75px;line-height:14.75px;color:#bbbbbb">Navicat</div>
<div class="a" style="left:381.45px;top:428.58px;white-space:pre;font-family:'Liberation Sans',sans-serif;font-size:14.85px;line-height:14.85px;color:#aaaaaa">等软件，下载地址：</div>
<div class="a" style="left:517.50px;top:431.04px;white-space:pre;font-family:'Liberation Mono',monospace;font-size:14.75px;line-height:14.75px;color:#bbbbbb">https:</div>
<div class="a" style="left:570.60px;top:431.04px;white-space:pre;font-family:'Liberation Mono',monospace;font-size:14.75px;line-height:14.75px;color:#bbbbbb">//www.jianguoyun.com/p/Dc5ht0AQ4_2rCRirw-kD</div>
<div class="a" style="left:8.50px;top:516.04px;white-space:pre;font-family:'Liberation Mono',monospace;font-size:14.75px;line-height:14.75px;color:#9876aa">## </div>
<div class="a" style="left:35.05px;top:513.58px;white-space:pre;font-family:'Liberation Sans',sans-serif;font-size:14.85px;line-height:14.85px;color:#9876aa">部署教程</div>
</div>
<svg style="left:721.2px;top:264.4px" width="35.799999999999955" height="4" viewBox="0 0 35.799999999999955 4"><path d="M0 3 L1.0 0 L3.0 3 L5.0 0 L7.0 3 L9.0 0 L11.0 3 L13.0 0 L15.0 3 L17.0 0 L19.0 3 L21.0 0 L23.0 3 L25.0 0 L27.0 3 L29.0 0 L31.0 3 L33.0 0" stroke="#62903f" stroke-width="1" fill="none"/></svg>
<svg style="left:898.5px;top:540.65px" width="62.5" height="4" viewBox="0 0 62.5 4"><path d="M0 3 L1.0 0 L3.0 3 L5.0 0 L7.0 3 L9.0 0 L11.0 3 L13.0 0 L15.0 3 L17.0 0 L19.0 3 L21.0 0 L23.0 3 L25.0 0 L27.0 3 L29.0 0 L31.0 3 L33.0 0 L35.0 3 L37.0 0 L39.0 3 L41.0 0 L43.0 3 L45.0 0 L47.0 3 L49.0 0 L51.0 3 L53.0 0 L55.0 3 L57.0 0 L59.0 3 L61.0 0" stroke="#62903f" stroke-width="1" fill="none"/></svg>
<svg style="left:660px;top:166px" width="9" height="19" viewBox="0 0 9 19"><path d="M1 1.5h7M1 17.5h7M4.5 1.5v16" stroke="#1a1a1a" stroke-width="2.6"/><path d="M1.5 1.5h6M1.5 17.5h6M4.5 1.5v16" stroke="#d8d8d8" stroke-width="1.1"/></svg>
<svg style="left:572px;top:125.4px" width="11" height="13" viewBox="0 0 11 13"><path d="M0.5 0.5h10v8l-5 4-5-4z" fill="#313335" stroke="#6a6c6e" stroke-width="1"/><path d="M3 5h5" stroke="#6a6c6e" stroke-width="1"/></svg>
<svg style="left:572px;top:316.65px" width="11" height="13" viewBox="0 0 11 13"><path d="M0.5 0.5h10v8l-5 4-5-4z" fill="#313335" stroke="#6a6c6e" stroke-width="1"/><path d="M3 5h5" stroke="#6a6c6e" stroke-width="1"/></svg>
<svg style="left:572px;top:614.15px" width="11" height="13" viewBox="0 0 11 13"><path d="M0.5 0.5h10v8l-5 4-5-4z" fill="#313335" stroke="#6a6c6e" stroke-width="1"/><path d="M3 5h5" stroke="#6a6c6e" stroke-width="1"/></svg>
<svg style="left:572px;top:250.89999999999998px" width="11" height="13" viewBox="0 0 11 13"><path d="M0.5 12.5h10v-8l-5-4-5 4z" fill="#313335" stroke="#6a6c6e" stroke-width="1"/><path d="M3 8h5" stroke="#6a6c6e" stroke-width="1"/></svg>
<svg style="left:572px;top:527.15px" width="11" height="13" viewBox="0 0 11 13"><path d="M0.5 12.5h10v-8l-5-4-5 4z" fill="#313335" stroke="#6a6c6e" stroke-width="1"/><path d="M3 8h5" stroke="#6a6c6e" stroke-width="1"/></svg>
<div class="a" style="left:1655px;top:98px;width:15px;height:544px;background:#2b2b2b;"></div>
<div class="a" style="left:1657px;top:101px;width:12px;height:12px;background:#d9a31c;"></div>
<div class="a" style="left:1660px;top:137px;width:9px;height:47px;background:#7d7f81;"></div>
<div class="a" style="left:1655px;top:238px;width:17px;height:2px;background:#d9a31c;"></div>
<div class="a" style="left:587px;top:630px;width:860px;height:10px;background:#4a4c4e;"></div>
<div class="a" style="left:1667px;top:98px;width:4px;height:544px;background:#2b2b2b;"></div>
<div class="a" style="left:1667px;top:98px;width:1px;height:544px;background:#454749;"></div>
<div class="a" style="left:1671px;top:98px;width:202px;height:544px;background:#3e3f41;"></div>
<div class="a" style="left:1873px;top:98px;width:7px;height:529px;background:#2b2b2b;"></div>
<div class="a" style="left:1690px;top:101.07px;white-space:pre;font-family:'Liberation Sans',sans-serif;font-size:20px;line-height:20px;color:#bababa;font-weight:normal;letter-spacing:0px;">具包 + lombok插件</div>
<div class="a" style="left:1690px;top:152.07px;white-space:pre;font-family:'Liberation Sans',sans-serif;font-size:20px;line-height:20px;color:#bababa;font-weight:normal;letter-spacing:0px;">前台：Vue + Vue</div>
<div class="a" style="left:1690px;top:183.07px;white-space:pre;font-family:'Liberation Sans',sans-serif;font-size:20px;line-height:20px;color:#bababa;font-weight:normal;letter-spacing:0px;">Router +</div>
<div class="a" style="left:1690px;top:215.07px;white-space:pre;font-family:'Liberation Sans',sans-serif;font-size:20px;line-height:20px;color:#bababa;font-weight:normal;letter-spacing:0px;">ELementUI + Axios</div>
<div class="a" style="left:1690px;top:278.22px;white-space:pre;font-family:'Liberation Sans',sans-serif;font-size:34px;line-height:34px;color:#c0c0c0;font-weight:normal;letter-spacing:0px;">系统简介</div>
<div class="a" style="left:1690px;top:327px;width:172px;height:2px;background:#2e3032;"></div>
<div class="a" style="left:1690px;top:356.07px;white-space:pre;font-family:'Liberation Sans',sans-serif;font-size:20px;line-height:20px;color:#bababa;font-weight:normal;letter-spacing:0px;">功能：首页推荐</div>
<div class="a" style="left:1690px;top:387.17px;white-space:pre;font-family:'Liberation Sans',sans-serif;font-size:20px;line-height:20px;color:#bababa;font-weight:normal;letter-spacing:0px;">（默认根据用户买</div>
<div class="a" style="left:1690px;top:418.27px;white-space:pre;font-family:'Liberation Sans',sans-serif;font-size:20px;line-height:20px;color:#bababa;font-weight:normal;letter-spacing:0px;">过的商品进行推</div>
<div class="a" style="left:1690px;top:449.37px;white-space:pre;font-family:'Liberation Sans',sans-serif;font-size:20px;line-height:20px;color:#bababa;font-weight:normal;letter-spacing:0px;">荐，如果没买过则</div>
<div class="a" style="left:1690px;top:480.47px;white-space:pre;font-family:'Liberation Sans',sans-serif;font-size:20px;line-height:20px;color:#bababa;font-weight:normal;letter-spacing:0px;">根据商品销量推</div>
<div class="a" style="left:1690px;top:511.57px;white-space:pre;font-family:'Liberation Sans',sans-serif;font-size:20px;line-height:20px;color:#bababa;font-weight:normal;letter-spacing:0px;">荐）、轮播图管</div>
<div class="a" style="left:1690px;top:542.67px;white-space:pre;font-family:'Liberation Sans',sans-serif;font-size:20px;line-height:20px;color:#bababa;font-weight:normal;letter-spacing:0px;">理、商品、订单、</div>
<div class="a" style="left:1690px;top:573.77px;white-space:pre;font-family:'Liberation Sans',sans-serif;font-size:20px;line-height:20px;color:#bababa;font-weight:normal;letter-spacing:0px;">购物车、商品评</div>
<div class="a" style="left:1690px;top:604.87px;white-space:pre;font-family:'Liberation Sans',sans-serif;font-size:20px;line-height:20px;color:#bababa;font-weight:normal;letter-spacing:0px;">论、商品评论点</div>
<div class="a" style="left:1680px;top:627px;width:193px;height:15px;background:#2f3133;"></div>
<div class="a" style="left:1683px;top:629px;width:50px;height:11px;background:#4a4c4e;border-radius:5px"></div>
<div class="a" style="left:1873px;top:627px;width:7px;height:15px;background:#ffffff;"></div>
<svg style="left:1673px;top:362px" width="3" height="16" viewBox="0 0 3 16"><path d="M1.5 0v16" stroke="#777" stroke-width="1" stroke-dasharray="1 1.5"/></svg>
<div class="a" style="left:22px;top:642px;width:1858px;height:274px;background:#3e3f41;"></div>
<div class="a" style="left:22px;top:642px;width:1858px;height:1px;background:#2b2b2b;"></div>
<div class="a" style="left:22px;top:673px;width:1858px;height:1px;background:#323435;"></div>
<div class="a" style="left:31px;top:652.30px;white-space:pre;font-family:'Liberation Sans',sans-serif;font-size:15px;line-height:15px;color:#bbbbbb;font-weight:normal;letter-spacing:0.3px;">Run:</div>
<div class="a" style="left:72px;top:643px;width:156px;height:30px;background:#393b3d;"></div>
<svg style="left:88px;top:649px" width="20" height="20" viewBox="0 0 20 20"><path d="M1.5 16.5 C-1 9 4 2 17.5 0.5 C18.5 8 15 15.5 6 16.5 C4 16.8 2.5 17.5 1.5 16.5z" fill="#62b543"/><path d="M3 15 C6 10 10 7 14 4" stroke="#3e3f41" stroke-width="0.8" fill="none" opacity="0.5"/><polygon points="17.10,13.00 14.30,17.85 8.70,17.85 5.90,13.00 8.70,8.15 14.30,8.15" fill="#c9cbcd" stroke="#3e3f41" stroke-width="1.1"/><path d="M9.90 11.10A2.7 2.7 0 1 0 13.10 11.10" stroke="#3a3b3d" stroke-width="1.0" fill="none"/><path d="M11.50 9.80v2.8" stroke="#3a3b3d" stroke-width="1.0"/><circle cx="15.2" cy="17" r="2.7" fill="#2fd12f" stroke="#3e3f41" stroke-width="0.6"/></svg>
<div class="a" style="left:113px;top:651.46px;white-space:pre;font-family:'Liberation Sans',sans-serif;font-size:16px;line-height:16px;color:#bbbbbb;font-weight:normal;letter-spacing:0.45px;">Application</div>
<svg style="left:205px;top:656px" width="9" height="9" viewBox="0 0 9 9"><path d="M0.5 0.5l8 8M8.5 0.5l-8 8" stroke="#6e7072" stroke-width="1.3"/></svg>
<svg style="left:1830px;top:650px" width="16" height="16" viewBox="0 0 16 16"><path d="M6.37,2.33 L6.06,0.24 L9.94,0.24 L9.63,2.33 L12.10,3.76 L13.75,2.44 L15.69,5.79 L13.72,6.57 L13.72,9.43 L15.69,10.21 L13.75,13.56 L12.10,12.24 L9.63,13.67 L9.94,15.76 L6.06,15.76 L6.37,13.67 L3.90,12.24 L2.25,13.56 L0.31,10.21 L2.28,9.43 L2.28,6.57 L0.31,5.79 L2.25,2.44 L3.90,3.76z" fill="#b0b2b4"/><circle cx="8" cy="8" r="2.4" fill="#3e3f41"/></svg>
<div class="a" style="left:1862px;top:657px;width:16px;height:2.5px;background:#b0b2b4;"></div>
<div class="a" style="left:22px;top:674px;width:1858px;height:38px;background:#3e3f41;"></div>
<div class="a" style="left:58px;top:674px;width:90px;height:33px;background:#4e5254;"></div>
<div class="a" style="left:148px;top:674px;width:101px;height:33px;background:#414446;"></div>
<div class="a" style="left:58px;top:707px;width:1822px;height:5px;background:#4b4e50;"></div>
<svg style="left:66px;top:685px" width="16" height="13" viewBox="0 0 16 13"><rect x="0" y="0" width="16" height="13" fill="#c0c2c4"/><path d="M4 3l4 3.5-4 3.5" stroke="#3e3f41" stroke-width="1.6" fill="none"/></svg>
<div class="a" style="left:88px;top:684.30px;white-space:pre;font-family:'Liberation Sans',sans-serif;font-size:15px;line-height:15px;color:#bbbbbb;font-weight:normal;letter-spacing:0.0px;">Console</div>
<svg style="left:153px;top:683px" width="20" height="17" viewBox="0 0 20 17"><path d="M3 14 L10 3 L17 14" stroke="#e8912d" stroke-width="1.6" fill="none"/><circle cx="10" cy="3" r="2.8" fill="#e8912d"/><circle cx="3.5" cy="13.5" r="3.2" fill="#e8912d"/><circle cx="16.5" cy="13.5" r="3.2" fill="#e8912d"/><path d="M1 7l2 5M19 7l-2 5" stroke="#e8912d" stroke-width="1.4"/></svg>
<div class="a" style="left:176px;top:684.30px;white-space:pre;font-family:'Liberation Sans',sans-serif;font-size:15px;line-height:15px;color:#bbbbbb;font-weight:normal;letter-spacing:0.26px;">Endpoints</div>
<div class="a" style="left:22px;top:674px;width:36px;height:242px;background:#3e3f41;"></div>
<div class="a" style="left:58px;top:674px;width:1px;height:242px;background:#323435;"></div>
<div class="a" style="left:59px;top:712px;width:36px;height:196px;background:#3a3c3e;"></div>
<svg style="left:32px;top:685px" width="17" height="17" viewBox="0 0 17 17"><path d="M10.5 3.5 A6 6 0 1 0 7 14.5" stroke="#59a869" stroke-width="2.6" fill="none"/><path d="M9.5 0 L15 3.8 L9.5 7.5z" fill="#59a869"/><rect x="10" y="10" width="7" height="7" fill="#d2d4d6"/></svg>
<div class="a" style="left:34px;top:720px;width:12.5px;height:12px;background:#db4a4a;"></div>
<div class="a" style="left:35px;top:750px;width:3.5px;height:14px;background:#c4c6c8;"></div>
<div class="a" style="left:41.5px;top:750px;width:3.5px;height:14px;background:#c4c6c8;"></div>
<svg style="left:31px;top:783px" width="19" height="16" viewBox="0 0 19 16"><path d="M0 3h5l1.5-3h6L14 3h5v13H0z" fill="#c4c6c8"/><circle cx="9.5" cy="9.5" r="3.5" fill="#3e3f41"/><circle cx="9.5" cy="9.5" r="1.8" fill="#c4c6c8"/></svg>
<svg style="left:32px;top:814px" width="18" height="18" viewBox="0 0 18 18"><ellipse cx="7" cy="9" rx="5" ry="6.5" fill="#59a869"/><path d="M0 6h14M0 10h14M0 14h14M3 0l2 3M11 0l-2 3" stroke="#59a869" stroke-width="1.8"/><path d="M10 17l7-7M12 10h5v5" stroke="#c4c6c8" stroke-width="2" fill="none"/></svg>
<svg style="left:31px;top:846px" width="18" height="19" viewBox="0 0 18 19"><path d="M5 5V1h12v17H5v-4" stroke="#c4c6c8" stroke-width="2" fill="none"/><path d="M0 9.5h9M6 6l4 3.5-4 3.5" stroke="#db4a4a" stroke-width="2.2" fill="none"/></svg>
<div class="a" style="left:27px;top:876px;width:26px;height:1px;background:#4f5254;"></div>
<svg style="left:36.5px;top:894px" width="9" height="7" viewBox="0 0 9 7"><path d="M0.8 0.6L4 3.4 0.8 6.2M5 0.6L8.2 3.4 5 6.2" stroke="#c4c4c4" stroke-width="1.5" fill="none"/></svg>
<svg style="left:69px;top:724px" width="14" height="17" viewBox="0 0 14 17"><path d="M7 17V2M1 8l6-6 6 6" stroke="#5e6062" stroke-width="1.8" fill="none"/></svg>
<svg style="left:69px;top:756px" width="14" height="17" viewBox="0 0 14 17"><path d="M7 0v15M1 9l6 6 6-6" stroke="#5e6062" stroke-width="1.8" fill="none"/></svg>
<div class="a" style="left:62px;top:783px;width:28px;height:28px;background:#4e5254;border-radius:3px"></div>
<svg style="left:68px;top:789px" width="16" height="16" viewBox="0 0 16 16"><path d="M0 1h16M0 6h13a3 3 0 0 1 0 6H8M0 11h3" stroke="#c4c6c8" stroke-width="1.8" fill="none"/><path d="M10 9l-3 3 3 3" stroke="#c4c6c8" stroke-width="1.6" fill="none"/></svg>
<div class="a" style="left:62px;top:816px;width:28px;height:28px;background:#4e5254;border-radius:3px"></div>
<svg style="left:68px;top:822px" width="16" height="16" viewBox="0 0 16 16"><path d="M0 2h5M0 6.5h5M0 14h16" stroke="#c4c6c8" stroke-width="1.8"/><path d="M10 0v10M6.5 6.5L10 10l3.5-3.5" stroke="#c4c6c8" stroke-width="1.8" fill="none"/></svg>
<svg style="left:68px;top:853px" width="16" height="17" viewBox="0 0 16 17"><rect x="3" y="0" width="10" height="5" fill="#c4c6c8"/><rect x="0" y="5" width="16" height="7" fill="#c4c6c8"/><rect x="3" y="10" width="10" height="7" fill="#c4c6c8" stroke="#3a3c3e" stroke-width="1.5"/></svg>
<svg style="left:72.8px;top:894px" width="9" height="7" viewBox="0 0 9 7"><path d="M0.8 0.6L4 3.4 0.8 6.2M5 0.6L8.2 3.4 5 6.2" stroke="#c4c4c4" stroke-width="1.5" fill="none"/></svg>
<div class="a" style="left:95px;top:712px;width:1785px;height:196px;background:#2b2b2b;"></div>
<div class="a" style="left:22px;top:908px;width:1858px;height:8px;background:#3e3f41;"></div>
<div class="a" style="left:22px;top:908px;width:88px;height:8px;background:#2b2b2b;"></div>
<div class="a" style="left:22px;top:907px;width:1858px;height:1px;background:#4b4e50;"></div>
<div class="a" style="left:111px;top:896px;width:1709px;height:11px;background:#4a4c4e;"></div>
<div class="a" style="left:1875px;top:874px;width:5px;height:32px;background:#4a4c4e;"></div>
<div class="a" style="left:95px;top:712px;width:1785px;height:184px;overflow:hidden">
<div class="a" style="left:-95px;top:-712px;width:1880px;height:916px">
<div class="a" style="left:110px;top:705.50px;white-space:pre;font-family:'Liberation Mono',monospace;font-size:15px;line-height:15px;color:#bbbbbb"><span style="color:#bbbbbb">2022-12-03 20:11:32.416 </span><span style="color:#a5c25c">DEBUG</span><span style="color:#bbbbbb"> </span><span style="color:#b294bb">22668</span><span style="color:#bbbbbb"> --- [nio-9999-exec-5] </span><span style="color:#3a9e9a">com.example.mapper.GoodsMapper.findPage </span><span style="color:#bbbbbb"> : ==&gt; Parameters: </span></div>
<div class="a" style="left:110px;top:726.83px;white-space:pre;font-family:'Liberation Mono',monospace;font-size:15px;line-height:15px;color:#bbbbbb"><span style="color:#bbbbbb">2022-12-03 20:11:32.417 </span><span style="color:#a5c25c">DEBUG</span><span style="color:#bbbbbb"> </span><span style="color:#b294bb">22668</span><span style="color:#bbbbbb"> --- [nio-9999-exec-6] </span><span style="color:#3a9e9a">c.e.mapper.CategoryMapper.selectList    </span><span style="color:#bbbbbb"> : ==&gt;  Preparing: SELECT id,no,name FROM category</span></div>
<div class="a" style="left:110px;top:748.16px;white-space:pre;font-family:'Liberation Mono',monospace;font-size:15px;line-height:15px;color:#bbbbbb"><span style="color:#bbbbbb">2022-12-03 20:11:32.417 </span><span style="color:#a5c25c">DEBUG</span><span style="color:#bbbbbb"> </span><span style="color:#b294bb">22668</span><span style="color:#bbbbbb"> --- [nio-9999-exec-6] </span><span style="color:#3a9e9a">c.e.mapper.CategoryMapper.selectList    </span><span style="color:#bbbbbb"> : ==&gt; Parameters: </span></div>
<div class="a" style="left:110px;top:769.49px;white-space:pre;font-family:'Liberation Mono',monospace;font-size:15px;line-height:15px;color:#bbbbbb"><span style="color:#bbbbbb">2022-12-03 20:11:32.417 </span><span style="color:#a5c25c">DEBUG</span><span style="color:#bbbbbb"> </span><span style="color:#b294bb">22668</span><span style="color:#bbbbbb"> --- [nio-9999-exec-5] </span><span style="color:#3a9e9a">com.example.mapper.GoodsMapper.findPage </span><span style="color:#bbbbbb"> : ==&gt;  Preparing: select g.*,c.name as categoryName from goods g left join category c on g</span></div>
<div class="a" style="left:110px;top:790.82px;white-space:pre;font-family:'Liberation Mono',monospace;font-size:15px;line-height:15px;color:#bbbbbb"><span style="color:#bbbbbb"> .category_id = c.id LIMIT ?,?</span></div>
<div class="a" style="left:110px;top:812.15px;white-space:pre;font-family:'Liberation Mono',monospace;font-size:15px;line-height:15px;color:#bbbbbb"><span style="color:#bbbbbb">2022-12-03 20:11:32.418 </span><span style="color:#a5c25c">DEBUG</span><span style="color:#bbbbbb"> </span><span style="color:#b294bb">22668</span><span style="color:#bbbbbb"> --- [nio-9999-exec-5] </span><span style="color:#3a9e9a">com.example.mapper.GoodsMapper.findPage </span><span style="color:#bbbbbb"> : ==&gt; Parameters: 0(Long), 10(Long)</span></div>
<div class="a" style="left:110px;top:833.48px;white-space:pre;font-family:'Liberation Mono',monospace;font-size:15px;line-height:15px;color:#bbbbbb"><span style="color:#bbbbbb">2022-12-03 20:11:32.422 </span><span style="color:#a5c25c">DEBUG</span><span style="color:#bbbbbb"> </span><span style="color:#b294bb">22668</span><span style="color:#bbbbbb"> --- [nio-9999-exec-5] </span><span style="color:#3a9e9a">com.example.mapper.GoodsMapper.findPage </span><span style="color:#bbbbbb"> : &lt;==      Total: 6</span></div>
<div class="a" style="left:110px;top:854.81px;white-space:pre;font-family:'Liberation Mono',monospace;font-size:15px;line-height:15px;color:#bbbbbb"><span style="color:#bbbbbb">2022-12-03 20:11:32.431 </span><span style="color:#a5c25c">DEBUG</span><span style="color:#bbbbbb"> </span><span style="color:#b294bb">22668</span><span style="color:#bbbbbb"> --- [nio-9999-exec-6] </span><span style="color:#3a9e9a">c.e.mapper.CategoryMapper.selectList    </span><span style="color:#bbbbbb"> : &lt;==      Total: 4</span></div>
</div></div>
<div class="a" style="left:1670px;top:691.5px;width:210px;height:29.5px;background:#ffffff;"></div>
<svg style="left:1658px;top:687px" width="37" height="36" viewBox="0 0 37 36"><g transform="rotate(-14 18 18)"><rect x="4" y="4" width="29" height="29" rx="4" fill="#ee6425"/></g><path d="M27.5 11.2 C20 9.5 7.5 11 7.8 15.8 C8 19.8 25.5 17.5 25 22.5 C24.6 27 15 28.2 9.5 27.6" stroke="#fff" stroke-width="4.4" fill="none" stroke-linecap="round"/></svg>
<div class="a" style="left:1701px;top:698.92px;white-space:pre;font-family:'Liberation Sans',sans-serif;font-size:19px;line-height:19px;color:#2a78d0;font-weight:bold;letter-spacing:0px;-webkit-text-stroke:1px #2a78d0;">中</div>
<div class="a" style="left:1730px;top:698.61px;white-space:pre;font-family:'Liberation Sans',sans-serif;font-size:17px;line-height:17px;color:#1e7bd0;font-weight:bold;letter-spacing:0px;">°,</div>
<svg style="left:1755px;top:697px" width="19" height="19" viewBox="0 0 19 19"><circle cx="9.5" cy="9.5" r="8.3" stroke="#1e7bd0" stroke-width="2" fill="none"/><circle cx="6.5" cy="7.5" r="1.3" fill="#1e7bd0"/><circle cx="12.5" cy="7.5" r="1.3" fill="#1e7bd0"/><path d="M5.5 11.5c2 3 6 3 8 0" stroke="#1e7bd0" stroke-width="1.8" fill="none"/></svg>
<svg style="left:1785px;top:695px" width="14" height="23" viewBox="0 0 14 23"><rect x="3" y="0" width="8" height="14" rx="4" fill="#1e7bd0"/><path d="M1 9c0 7 12 7 12 0M7 16v5M3 21h8" stroke="#1e7bd0" stroke-width="2" fill="none"/></svg>
<svg style="left:1808px;top:699px" width="21" height="15" viewBox="0 0 21 15"><rect x="0" y="0" width="21" height="15" rx="2" fill="#1e7bd0"/><path d="M3 4h2M7 4h2M11 4h2M15 4h3M3 7.5h2M7 7.5h2M11 7.5h2M15 7.5h3M5 11h11" stroke="#fff" stroke-width="1.6"/></svg>
<svg style="left:1838px;top:697px" width="22" height="20" viewBox="0 0 22 20"><circle cx="6" cy="4" r="3.5" fill="#b8bcc2"/><path d="M0 20c0-8 3-10 6-10s6 2 6 10z" fill="#b8bcc2"/><path d="M9 10h13M12 13.5h10M12 17h10" stroke="#b8bcc2" stroke-width="1.4"/></svg>
<svg style="left:1864px;top:696px" width="16" height="20" viewBox="0 0 16 20"><path d="M4 0 L0 4 L2 9 L4 8 L4 19 L16 19 L16 0 L12 0 C11 3 6 3 5 0z" fill="#1e7bd0"/></svg>
</body></html>
